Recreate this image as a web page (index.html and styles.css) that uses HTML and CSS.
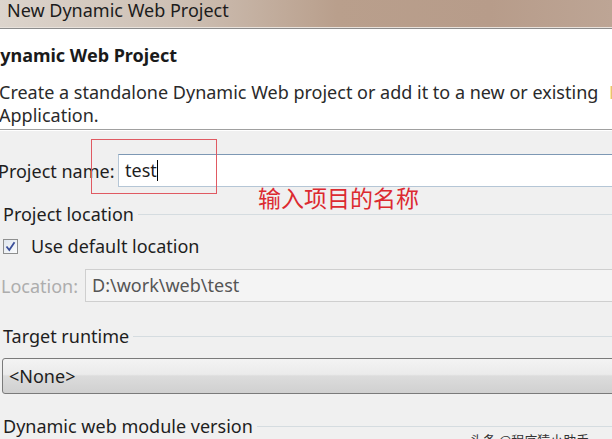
FILE: index.html
```html
<!DOCTYPE html>
<html lang="en">
<head>
  <meta charset="UTF-8">
  <title>New Dynamic Web Project</title>
  <link rel="stylesheet" href="styles.css">
</head>
<body>
  <div class="window">
    <div class="titlebar">New Dynamic Web Project</div>

    <div class="header">
      <h1>Dynamic Web Project</h1>
      <p>Create a standalone Dynamic Web project or add it to a new or existing <span class="cut">E</span><br>Application.</p>
    </div>

    <div class="content">
      <div class="row name-row">
        <label class="name-label" for="pname">Project name:</label>
        <div class="input name-input" id="pname">test<span class="caret"></span></div>
      </div>

      <div class="group">Project location</div>

      <div class="check-row">
        <span class="checkbox">
          <svg width="11" height="11" viewBox="0 0 11 11"><path d="M1.5 5.5 L4.3 9 L9.5 1.2" fill="none" stroke="#3b4f9a" stroke-width="1.8"/></svg>
        </span>
        <span>Use default location</span>
      </div>

      <div class="row loc-row">
        <span class="loc-label">Location:</span>
        <div class="input loc-input">D:\work\web\test</div>
      </div>

      <div class="group group-runtime">Target runtime</div>

      <div class="combo">&lt;None&gt;</div>

      <div class="group group-module">Dynamic web module version</div>
    </div>

    <!-- annotation drawn over the dialog -->
    <div class="mark"></div>
    <div class="note">输入项目的名称</div>
    <div class="watermark">头条 @程序猿小助手</div>
  </div>
</body>
</html>
```

FILE: styles.css
```css
body {
  margin: 0;
  padding: 0;
  font-family: 'Noto Sans', 'Open Sans', sans-serif;
  color: #1e1e1e;
  background: #f0f0f0;
}

.window {
  position: relative;
  width: 612px;
  height: 439px;
  overflow: hidden;
  background: #f0f0f0;
}

.titlebar {
  height: 27px;
  line-height: 20px;
  padding-left: 7px;
  font-size: 18px;
  color: #1c1c1c;
  background: linear-gradient(90deg, #dcd4cc 0%, #cdbfb3 30%, #b99f8c 55%, #b79c8a 80%, #bda595 100%);
  border-bottom: 1px solid #e8e2dc;
  box-shadow: 0 1px 0 #8c8c8c;
  white-space: nowrap;
}

.header {
  background: #fff;
  height: 100px;
  margin-top: 1px;
  border-bottom: 1px solid #a0a0a0;
  box-shadow: 0 1px 0 #fff;
}

.header h1 {
  margin: 0;
  padding-top: 15px;
  margin-left: -13px;
  font-size: 18px;
  font-weight: bold;
  line-height: 22px;
  color: #1a1a1a;
}

.header p {
  margin: 15px 0 0 -1px;
  font-size: 18px;
  line-height: 23px;
  color: #2a2a2a;
  white-space: nowrap;
}

.cut {
  margin-left: 6px;
  color: #e8c070;
}

.content {
  display: flex;
  flex-direction: column;
  font-size: 18px;
}

.row {
  display: flex;
  align-items: center;
  height: 33px;
}

.name-row {
  margin-top: 24px;
}

.name-label {
  width: 120px;
  margin-left: -2px;
  white-space: nowrap;
}

.input {
  flex: 1;
  height: 31px;
  line-height: 31px;
  margin-right: -20px;
  padding-left: 6px;
  background: #fff;
  border: 1px solid #b5c6d6;
  border-top-color: #7d98b4;
}

.caret {
  display: inline-block;
  width: 1px;
  height: 21px;
  background: #000;
  vertical-align: -4px;
}

.group {
  display: flex;
  align-items: center;
  gap: 4px;
  height: 20px;
  margin-top: 17px;
  padding-left: 3px;
}

.group::after {
  content: "";
  flex: 1;
  height: 1px;
  background: #d5dce0;
}

.check-row {
  display: flex;
  align-items: center;
  gap: 13px;
  height: 20px;
  margin-top: 12px;
  padding-left: 3px;
}

.checkbox {
  display: flex;
  align-items: center;
  justify-content: center;
  width: 13px;
  height: 13px;
  border: 1px solid #8e8f8f;
  background: linear-gradient(135deg, #dfe6ee, #fbfcfd);
}

.loc-row {
  margin-top: 13px;
}

.loc-label {
  width: 84px;
  margin-left: 1px;
  color: #adadad;
}

.loc-input {
  background: #f4f4f4;
  border-color: #cfcfcf;
  color: #555;
}

.group-runtime {
  margin-top: 24px;
}

.combo {
  height: 34px;
  line-height: 34px;
  margin: 12px -20px 0 2px;
  padding-left: 6px;
  border: 1px solid #7a7a7a;
  border-radius: 3px;
  background: linear-gradient(#f3f3f3 0%, #ebebeb 45%, #dcdcdc 50%, #d0d0d0 100%);
}

.group-module {
  margin-top: 22px;
}

.mark {
  position: absolute;
  left: 91px;
  top: 139px;
  width: 124px;
  height: 53px;
  border: 1px solid #e05a62;
}

.note {
  position: absolute;
  left: 258px;
  top: 182px;
  font-family: 'Noto Sans CJK SC', sans-serif;
  font-size: 23px;
  line-height: 30px;
  color: #dc2a30;
}

.watermark {
  position: absolute;
  left: 470px;
  top: 430px;
  font-family: 'Noto Sans CJK SC', sans-serif;
  font-size: 13px;
  color: #333;
}
```
